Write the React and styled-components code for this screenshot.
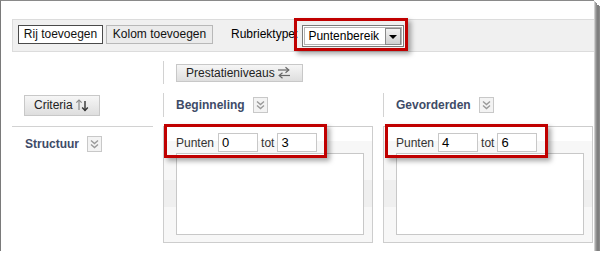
import styled, { createGlobalStyle } from "styled-components";

const GlobalStyle = createGlobalStyle`
  html, body {
    margin: 0;
    padding: 0;
    background: #ffffff;
    overflow: hidden;
  }
  body {
    font-family: "Liberation Sans", Arial, sans-serif;
    font-size: 12px;
    color: #000;
  }
`;

const Frame = styled.div`
  width: 594px;
  height: 251px;
  border-top: 1px solid #8a8a8a;
  border-left: 1px solid #7a7a7a;
  background: #fff;
  overflow: hidden;
  padding: 18px 0 0 11px;
  box-sizing: border-box;
  box-shadow: 1px 1px 0 #cfcfcf, 2px 2px 0 #a8a8a8, 3px 3px 0 #8f8f8f,
    5px 5px 0 #7f7f7f, 6px 6px 0 #8a8a8a;
`;

const Toolbar = styled.div`
  display: flex;
  align-items: flex-start;
  height: 33px;
  box-sizing: border-box;
  padding: 5px 0 0 5px;
  background: #f0f0f0;
  border: 1px solid #dcdcdc;
  border-right: none;
`;

const ToolButton = styled.button`
  width: ${(p) => p.$w}px;
  height: 19px;
  margin: 0 3px 0 0;
  padding: 0;
  font-family: inherit;
  font-size: 12px;
  color: #111;
  border: 1px solid ${(p) => (p.$active ? "#4a4a4a" : "#b8b8b8")};
  background: ${(p) => (p.$active ? "#fff" : "#ebebeb")};
  border-radius: 0;
  line-height: 17px;
`;

const Label = styled.span`
  margin: 0 0 0 15px;
  line-height: 19px;
  font-size: 12px;
`;

const SelectWrap = styled.div`
  position: relative;
  margin-left: 4px;
`;

const Select = styled.div`
  display: flex;
  align-items: center;
  justify-content: space-between;
  width: 102px;
  height: 22px;
  box-sizing: border-box;
  border: 1px solid #7a7a7a;
  box-shadow: inset 0 0 0 1px #fff, inset 0 0 0 2px #b4b4b4;
  background: #fff;
  padding: 0 2px 0 5px;
  font-size: 12px;
`;

const DropButton = styled.div`
  width: 16px;
  height: 17px;
  box-sizing: border-box;
  border: 1px solid #8a8a8a;
  background: linear-gradient(#f2f2f2, #cfcfcf);
  display: flex;
  align-items: center;
  justify-content: center;
  &::after {
    content: "";
    border-left: 4px solid transparent;
    border-right: 4px solid transparent;
    border-top: 4px solid #000;
    margin-top: 2px;
  }
`;

const Highlight = styled.div`
  position: absolute;
  left: ${(p) => p.$left}px;
  top: ${(p) => p.$top}px;
  width: ${(p) => p.$width}px;
  height: ${(p) => p.$height}px;
  box-sizing: border-box;
  border: 3px solid #c00000;
  box-shadow: 3px 3px 5px rgba(0, 0, 0, 0.35);
  pointer-events: none;
`;

const Grid = styled.div`
  display: grid;
  grid-template-columns: 141px 210px 210px;
  grid-template-rows: 32px 33px 117px;
  column-gap: 10px;
  margin-top: 9px;
`;

const Cell = styled.div`
  align-self: start;
  box-sizing: border-box;
  display: flex;
  align-items: center;
  height: ${(p) => p.$h}px;
  padding-left: ${(p) => p.$pad ?? 12}px;
  border-left: ${(p) => (p.$line ? "1px solid #d2d2d2" : "none")};
`;

const GrayButton = styled.button`
  display: flex;
  align-items: center;
  gap: 2px;
  height: ${(p) => p.$h}px;
  width: ${(p) => p.$w}px;
  padding: 0 0 0 9px;
  font-family: inherit;
  font-size: 12px;
  color: #222;
  border: 1px solid #c8c8c8;
  border-radius: 0;
  background: linear-gradient(#f6f6f6, #dedede);
`;

const HeaderTitle = styled.span`
  font-weight: bold;
  font-size: 12px;
  color: #3e4b67;
  margin-right: 8px;
`;

const ExpandBox = styled.span`
  display: inline-flex;
  align-items: center;
  justify-content: center;
  width: 15px;
  height: 16px;
  box-sizing: border-box;
  border: 1px solid #c8c8c8;
  background: #f3f3f3;
`;

const RowHead = styled.div`
  border-top: 1px solid #d2d2d2;
  display: flex;
  align-items: center;
  height: 34px;
  padding: 1px 0 0 13px;
  box-sizing: border-box;
`;

const LevelBox = styled.div`
  position: relative;
  box-sizing: border-box;
  height: 117px;
  border: 1px solid #cdcdcd;
  background: linear-gradient(
    to bottom,
    #fff 0 14px,
    #f7f7f7 14px 53px,
    #efefef 53px 80px,
    #f7f7f7 80px
  );
`;

const PointsRow = styled.div`
  display: flex;
  align-items: center;
  padding: 6px 0 0 12px;
  height: 19px;
  color: #333;
  font-size: 12px;
`;

const PointInput = styled.div`
  width: 40px;
  height: 19px;
  box-sizing: border-box;
  border: 1px solid #c8c8c8;
  background: #fff;
  margin: 0 ${(p) => p.$mr ?? 3}px 0 ${(p) => p.$ml ?? 4}px;
  padding-left: 3px;
  font-size: 13px;
  line-height: 18px;
  color: #000;
`;

const TextBox = styled.div`
  width: 188px;
  height: 82px;
  box-sizing: border-box;
  margin: 1px 0 0 12px;
  border: 1px solid #c8c8c8;
  background: #fff;
`;

function ExpandIcon() {
  return (
    <ExpandBox>
      <svg width="9" height="10" viewBox="0 0 9 10">
        <path d="M1 1.5 L4.5 4.5 L8 1.5" fill="none" stroke="#9a9a9a" strokeWidth="1.4" />
        <path d="M1 5.5 L4.5 8.5 L8 5.5" fill="none" stroke="#9a9a9a" strokeWidth="1.4" />
      </svg>
    </ExpandBox>
  );
}

function SwapIcon() {
  return (
    <svg width="14" height="13" viewBox="0 0 14 13">
      <path d="M1 4 H11" stroke="#666" strokeWidth="1.2" />
      <path d="M8.5 1.3 L11.8 4 L8.5 6.7" fill="none" stroke="#666" strokeWidth="1.2" />
      <path d="M3 9.5 H13" stroke="#666" strokeWidth="1.2" />
      <path d="M5.5 6.8 L2.2 9.5 L5.5 12.2" fill="none" stroke="#666" strokeWidth="1.2" />
    </svg>
  );
}

function SortIcon() {
  return (
    <svg width="14" height="14" viewBox="0 0 14 14">
      <path d="M4 12 V2" stroke="#8a8a8a" strokeWidth="1.2" />
      <path d="M1.3 4.7 L4 2 L6.7 4.7" fill="none" stroke="#8a8a8a" strokeWidth="1.2" />
      <path d="M10 3 V12.5" stroke="#333" strokeWidth="1.4" />
      <path d="M7.2 9.6 L10 12.5 L12.8 9.6" fill="none" stroke="#333" strokeWidth="1.4" />
    </svg>
  );
}

function Level({ from, to, markLeft }) {
  return (
    <LevelBox>
      <Highlight $left={markLeft} $top={-3} $width={163} $height={34} />
      <PointsRow>
        Punten
        <PointInput>{from}</PointInput>
        tot
        <PointInput $ml={3}>{to}</PointInput>
      </PointsRow>
      <TextBox />
    </LevelBox>
  );
}

export default function App() {
  return (
    <>
      <GlobalStyle />
      <Frame>
        <Toolbar>
          <ToolButton $active $w={85}>Rij toevoegen</ToolButton>
          <ToolButton $w={107}>Kolom toevoegen</ToolButton>
          <Label>Rubriektype:</Label>
          <SelectWrap>
            <Select>
              Puntenbereik
              <DropButton />
            </Select>
            <Highlight $left={-8} $top={-7} $width={114} $height={33} />
          </SelectWrap>
        </Toolbar>

        <Grid>
          <div />
          <Cell $h={23} $line>
            <GrayButton $h={18} $w={127}>
              Prestatieniveaus
              <SwapIcon />
            </GrayButton>
          </Cell>
          <div />

          <Cell $h={24}>
            <GrayButton $h={21} $w={76}>
              Criteria
              <SortIcon />
            </GrayButton>
          </Cell>
          <Cell $h={24} $line>
            <HeaderTitle>Beginneling</HeaderTitle>
            <ExpandIcon />
          </Cell>
          <Cell $h={24} $line>
            <HeaderTitle>Gevorderden</HeaderTitle>
            <ExpandIcon />
          </Cell>

          <RowHead>
            <HeaderTitle>Structuur</HeaderTitle>
            <ExpandIcon />
          </RowHead>
          <Level from="0" to="3" markLeft={0} />
          <Level from="4" to="6" markLeft={1} />
        </Grid>
      </Frame>
    </>
  );
}
